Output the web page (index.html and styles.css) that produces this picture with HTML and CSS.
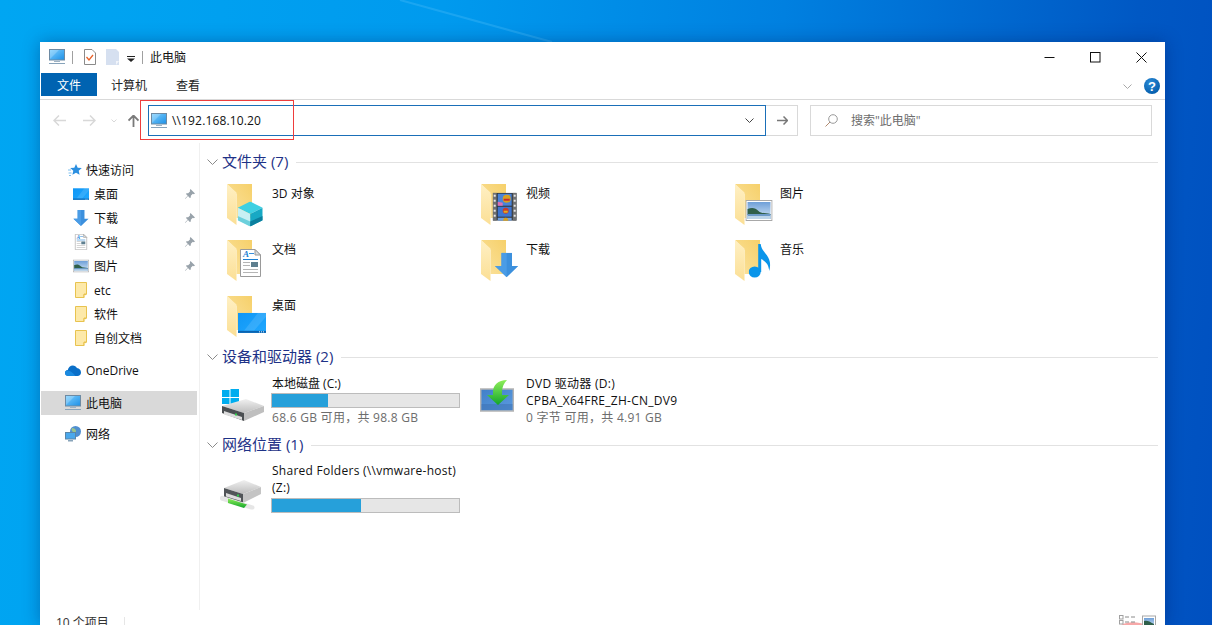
FILE: index.html
```html
<!DOCTYPE html>
<html lang="zh-CN">
<head>
<meta charset="utf-8">
<title>此电脑</title>
<link rel="stylesheet" href="styles.css">
</head>
<body>
<svg class="defs" aria-hidden="true">
  <defs>
    <linearGradient id="gScreen" x1="0" y1="0" x2="1" y2="1"><stop offset="0" stop-color="#7ed0ff"/><stop offset="1" stop-color="#1c8fe6"/></linearGradient>
    <linearGradient id="gBack" x1="1" y1="0" x2="0" y2="1"><stop offset="0" stop-color="#f6d06a"/><stop offset="1" stop-color="#fbe3a0"/></linearGradient>
    <linearGradient id="gLeaf" x1="0" y1="0" x2="0" y2="1"><stop offset="0" stop-color="#fff0c4"/><stop offset="1" stop-color="#fbdf95"/></linearGradient>
    <linearGradient id="gDesk" x1="0" y1="0" x2="1" y2="1"><stop offset="0" stop-color="#0f96f5"/><stop offset="1" stop-color="#20a8ff"/></linearGradient>
    <linearGradient id="gDisk" x1="0" y1="0" x2="0" y2="1"><stop offset="0" stop-color="#f0f0f0"/><stop offset="1" stop-color="#bdbdbd"/></linearGradient>
    <linearGradient id="gDvd" x1="0" y1="0" x2="1" y2="1"><stop offset="0" stop-color="#3f7fc8"/><stop offset="1" stop-color="#5c9be0"/></linearGradient>
    <linearGradient id="gGreen" x1="0" y1="0" x2="0" y2="1"><stop offset="0" stop-color="#8fee5a"/><stop offset="1" stop-color="#12a52a"/></linearGradient>
    <linearGradient id="gSky" x1="0" y1="0" x2="0" y2="1"><stop offset="0" stop-color="#6e9fd8"/><stop offset="1" stop-color="#d4e6f6"/></linearGradient>
    <radialGradient id="gHelp" cx=".4" cy=".3" r=".8"><stop offset="0" stop-color="#2b8ad6"/><stop offset="1" stop-color="#0059a8"/></radialGradient>

    <symbol id="monitor" viewBox="0 0 16 16">
      <rect x=".5" y=".5" width="15" height="10.5" fill="url(#gScreen)" stroke="#6d8aa3"/>
      <path d="M1 10l9-9H1z" fill="#fff" opacity=".22"/>
      <rect x="5" y="12" width="6" height="1" fill="#9fb3c4"/>
      <rect x="0" y="14" width="16" height="1" fill="#87a3ba"/>
    </symbol>
    <symbol id="folder" viewBox="0 0 25 41">
      <path d="M0 0H25V34H9.500V10z" fill="url(#gBack)"/>
      <path d="M0 0L9.500 8.500V41L0 34z" fill="url(#gLeaf)"/>
    </symbol>
    <symbol id="folder-small" viewBox="0 0 12 16">
      <path d="M.5.500h11v11.500h-2.500v3.500H.5z" fill="#fde9a9" stroke="#e8c34f"/>
      <path d="M9 15.500v-3h2.500" fill="#fff4cc" stroke="#e8c34f"/>
    </symbol>
    <symbol id="cube" viewBox="0 0 25 25">
      <path d="M12.500 0L25 6.300 12.500 12.500 0 6.300z" fill="#3ed0e2"/>
      <path d="M0 6.300L12.500 12.500V25L0 18.700z" fill="#c8f0f4"/>
      <path d="M0 14.500L12.500 20V25L0 18.700z" fill="#6cd0dc"/>
      <path d="M25 6.300L12.500 12.500V25L25 18.700z" fill="#17a9c4"/>
      <path d="M25 14.500L12.500 20V25L25 18.700z" fill="#0b7f9e"/>
    </symbol>
    <symbol id="film" viewBox="0 0 24 28">
      <rect width="24" height="28" fill="#2f3336"/>
      <rect x="0" width="4" height="28" fill="#6f7173"/>
      <rect x="20" width="4" height="28" fill="#6f7173"/>
      <g fill="#e8e8e8"><rect x="1" y="2" width="2" height="2"/><rect x="1" y="7" width="2" height="2"/><rect x="1" y="12" width="2" height="2"/><rect x="1" y="17" width="2" height="2"/><rect x="1" y="22" width="2" height="2"/><rect x="21" y="2" width="2" height="2"/><rect x="21" y="7" width="2" height="2"/><rect x="21" y="12" width="2" height="2"/><rect x="21" y="17" width="2" height="2"/><rect x="21" y="22" width="2" height="2"/></g>
      <rect x="5" y="1" width="14" height="12" fill="#4a84d8"/>
      <rect x="5" y="14" width="14" height="10" fill="#3f76d0"/>
      <rect x="5" y="25" width="14" height="3" fill="#6fa0e0"/>
      <circle cx="14" cy="6" r="4" fill="#d8a020"/><path d="M11 6h6v2h-6z" fill="#c82c2c"/>
      <path d="M5 9l5 1v3H5z" fill="#e070b0"/>
      <circle cx="13" cy="18" r="3" fill="#c83c2c"/><rect x="11" y="18" width="4" height="2" fill="#e0b020"/>
      <circle cx="13" cy="27.500" r="2.500" fill="#d8a020"/>
    </symbol>
    <symbol id="arrow" viewBox="0 0 23.300 24.600">
      <path d="M6.500 0H17V13.300H23.300L11.700 24.600 0 13.300H6.500z" fill="#3c90dd"/>
      <path d="M6.500 0H11.700V24.600L0 13.300H6.500z" fill="#4a9ce6"/>
    </symbol>
    <symbol id="doc" viewBox="0 0 21 28">
      <path d="M.5.500H15L20.500 6V27.500H.5z" fill="#fff" stroke="#9a9a9a"/>
      <path d="M15 .5V6H20.500z" fill="#d9dde0" stroke="#9a9a9a"/>
      <text class="doc-a" x="3" y="8">A</text>
      <rect x="9" y="4" width="5" height="1" fill="#3a8fdc"/>
      <rect x="3" y="10" width="15" height="1" fill="#1b7fd4"/>
      <rect x="3" y="13" width="7" height="1" fill="#b5b5b5"/>
      <rect x="11" y="13" width="7" height="5" fill="#5e7f8f"/>
      <rect x="3" y="16" width="7" height="1" fill="#b5b5b5"/>
      <rect x="3" y="20" width="15" height="1" fill="#b5b5b5"/>
      <rect x="3" y="23" width="15" height="1" fill="#b5b5b5"/>
    </symbol>
    <symbol id="desk" viewBox="0 0 28 20">
      <rect width="28" height="20" fill="url(#gDesk)"/>
      <path d="M6 18L20 0h8v4L16 18z" fill="#fff" opacity=".12"/>
      <rect y="18" width="28" height="2" fill="#0a63b0"/>
      <g fill="#e8f4ff"><rect x="21" y="18.500" width="1" height="1"/><rect x="23" y="18.500" width="1" height="1"/><rect x="25" y="18.500" width="1" height="1"/></g>
    </symbol>
    <symbol id="pic" viewBox="0 0 27 21">
      <rect x=".5" y=".5" width="26" height="20" fill="#fff" stroke="#a8a8a8"/>
      <rect x="2" y="2" width="23" height="17" fill="url(#gSky)"/>
      <path d="M2 9c5-2 8-1 11 2s8 2 12 3v1H2z" fill="#2f5f4a"/>
      <rect x="2" y="14" width="23" height="5" fill="#6c9ac8"/>
      <rect x="2" y="16" width="23" height="3" fill="#bcd5ea"/>
    </symbol>
    <symbol id="note" viewBox="0 0 22 34">
      <ellipse cx="6" cy="28" rx="6" ry="5.500" fill="#0a95ea"/>
      <path d="M9.500 0h2.500c.5 5 3.500 7.500 6 11 3 4 4.500 9 2.500 16-.5-5-2-9-8-12V28H9.500z" fill="#0a95ea"/>
    </symbol>
    <symbol id="pin" viewBox="0 0 10 10">
      <path d="M5.500 0L10 4.500 8.800 5.200 7.800 4.800 5.800 6.800 5.800 8.500 4.800 9 3 7 .5 9.800 0 9.500 2.700 6.700 1 5 1.500 4.200 3.200 4.200 5.200 2.200 4.800 1.200z" fill="#98a2aa"/>
    </symbol>
    <symbol id="windisk" viewBox="0 0 48 48">
      <g fill="#00adef"><rect x="4" y="11" width="7.500" height="7"/><rect x="12.500" y="10" width="8.500" height="8"/><rect x="4" y="19" width="7.500" height="6"/><rect x="12.500" y="19" width="8.500" height="6"/></g>
      <path d="M4 27L28 20 46 27 26 34z" fill="url(#gDisk)"/>
      <path d="M4 27L26 34V42L4 34z" fill="#4b4f52"/>
      <path d="M6 32L24 38V41L6 35.500z" fill="#dcdcdc"/>
      <path d="M26 34L46 27V33L26 42z" fill="#bfbfbf"/>
      <rect x="17" y="34.500" width="2" height="2" fill="#2fd04a"/>
    </symbol>
    <symbol id="dvd" viewBox="0 0 34 32">
      <rect x=".7" y="9" width="32.600" height="22" fill="url(#gDvd)" stroke="#b4b4b4" stroke-width="1.500"/>
      <rect x="1.500" y="24" width="31" height="6" fill="#3a6db0" opacity=".5"/>
      <path d="M27 0C18 0 13 5 13 12V15H7L18 25 29 15H22V12C22 7 24 3 27 0z" fill="url(#gGreen)"/>
    </symbol>
    <symbol id="netdisk" viewBox="0 0 44 31">
      <path d="M5 9L25 1 42 8 24 15z" fill="url(#gDisk)"/>
      <path d="M5 9L24 15V24L5 18z" fill="#515558"/>
      <path d="M7 14L22 19V22L7 17.500z" fill="#dcdcdc"/>
      <path d="M24 15L42 8V15L24 24z" fill="#c4c4c4"/>
      <rect x="18" y="15.500" width="2" height="2" fill="#2fd04a"/>
      <path d="M1 19c0-1.500 1.500-2.500 3-2l30 9.500c2 .7 2 3.500 0 4-1 .2-2 0-3-.3L2 21.500c-.7-.5-1-1.500-1-2.500z" fill="#e6e6e6"/>
      <path d="M9 19.500L28 25.500 25 29 9 24z" fill="url(#gGreen)"/>
    </symbol>
  </defs>
</svg>

<svg class="streak" viewBox="0 0 1212 42" aria-hidden="true"><path d="M400 0L552 42" stroke="#4cbcf8" stroke-width="2" opacity=".35"/></svg>

<div class="window">
  <header class="titlebar">
    <svg class="ic16"><use href="#monitor"/></svg>
    <span class="tb-sep tb-sep-a"></span>
    <svg class="tb-check" viewBox="0 0 12 16"><path d="M.5.500H8L11.500 4V15.500H.5z" fill="#fff" stroke="#8a8a8a"/><path d="M2.500 8l2.500 3 4-5" fill="none" stroke="#e8622a" stroke-width="1.300"/></svg>
    <svg class="tb-blank" viewBox="0 0 13 16"><path d="M0 0H10L13 3V16H0z" fill="#d6e0f0"/><path d="M10 12h3l-3 4z" fill="#f2f5fa"/></svg>
    <svg class="tb-drop" viewBox="0 0 8 6"><rect width="8" height="1" fill="#222"/><path d="M0 2.500H8L4 6z" fill="#222"/></svg>
    <span class="tb-sep tb-sep-b"></span>
    <span class="tb-title">此电脑</span>
    <div class="controls">
      <span class="ctl"><svg class="ctl-ic" viewBox="0 0 11 11"><path d="M.5 5.500h10" stroke="#111" fill="none"/></svg></span>
      <span class="ctl"><svg class="ctl-ic" viewBox="0 0 11 11"><rect x=".5" y=".5" width="9.500" height="9.500" stroke="#111" fill="none"/></svg></span>
      <span class="ctl"><svg class="ctl-ic" viewBox="0 0 11 11"><path d="M.5.500l10 10M10.500.500l-10 10" stroke="#111" fill="none"/></svg></span>
    </div>
  </header>

  <nav class="ribbon">
    <span class="tab tab-file">文件</span>
    <span class="tab">计算机</span>
    <span class="tab tab-last">查看</span>
    <svg class="rb-chev" viewBox="0 0 9 5"><path d="M.5.500l4 4 4-4" fill="none" stroke="#a8a8a8"/></svg>
    <svg class="rb-help" viewBox="0 0 16 16"><circle cx="8" cy="8" r="8" fill="url(#gHelp)"/><text class="help-q" x="8" y="12.500">?</text></svg>
  </nav>

  <div class="navrow">
    <svg class="nv-back" viewBox="0 0 13 11"><path d="M6 .5L1 5.500l5 5M1 5.500h12" fill="none" stroke="#d8d8d8" stroke-width="1.500"/></svg>
    <svg class="nv-fwd" viewBox="0 0 13 11"><path d="M7 .5l5 5-5 5M12 5.500H0" fill="none" stroke="#d8d8d8" stroke-width="1.500"/></svg>
    <svg class="nv-down" viewBox="0 0 6 4"><path d="M.5.500L3 3 5.500.500" fill="none" stroke="#d8d8d8"/></svg>
    <svg class="nv-up" viewBox="0 0 11 12"><path d="M.5 5.500L5.500.5l5 5M5.500 1V12" fill="none" stroke="#7a7a7a" stroke-width="1.800"/></svg>
    <div class="address">
      <svg class="ic16"><use href="#monitor"/></svg>
      <span class="addr-text">\\192.168.10.20</span>
      <svg class="addr-chev" viewBox="0 0 9 5"><path d="M.5.500l4 4 4-4" fill="none" stroke="#444"/></svg>
    </div>
    <div class="go"><svg class="go-ic" viewBox="0 0 11 9"><path d="M6.500.5l4 4-4 4M10 4.500H0" fill="none" stroke="#777" stroke-width="1.500"/></svg></div>
    <div class="search">
      <svg class="search-ic" viewBox="0 0 13 13"><circle cx="8" cy="5" r="4.300" fill="none" stroke="#9a9a9a"/><path d="M5 8L.5 12.500" stroke="#b08a70" fill="none"/></svg>
      <span class="search-text">搜索"此电脑"</span>
    </div>
  </div>

  <div class="main">
    <aside class="sidebar">
      <div class="sb-item sb-top">
        <svg class="sb-star" viewBox="0 0 14 14"><path d="M8 1l1.700 3.700 4.100.4-3.100 2.700.9 4L8 9.700 4.400 11.800l.9-4L2.200 5.100l4.100-.4z" fill="#2b8fe0"/><path d="M0 7h3M.5 10h3M1 12.500h2" stroke="#7cc0f0" fill="none"/></svg>
        <span class="sb-label">快速访问</span>
      </div>
      <div class="sb-item sb-sub"><svg class="sb-ic sb-ic-desk"><use href="#desk"/></svg><span class="sb-label">桌面</span><svg class="pin"><use href="#pin"/></svg></div>
      <div class="sb-item sb-sub"><svg class="sb-ic"><use href="#arrow"/></svg><span class="sb-label">下载</span><svg class="pin"><use href="#pin"/></svg></div>
      <div class="sb-item sb-sub"><svg class="sb-ic"><use href="#doc"/></svg><span class="sb-label">文档</span><svg class="pin"><use href="#pin"/></svg></div>
      <div class="sb-item sb-sub"><svg class="sb-ic"><use href="#pic"/></svg><span class="sb-label">图片</span><svg class="pin"><use href="#pin"/></svg></div>
      <div class="sb-item sb-sub"><svg class="sb-ic"><use href="#folder-small"/></svg><span class="sb-label">etc</span></div>
      <div class="sb-item sb-sub"><svg class="sb-ic"><use href="#folder-small"/></svg><span class="sb-label">软件</span></div>
      <div class="sb-item sb-sub"><svg class="sb-ic"><use href="#folder-small"/></svg><span class="sb-label">自创文档</span></div>
      <div class="sb-item sb-top sb-gap-a">
        <svg class="sb-cloud" viewBox="0 0 16 11"><path d="M3.500 11C1.500 11 0 9.700 0 8c0-1.600 1.200-2.800 2.800-2.900C3.300 2.300 5.400.5 7.800.5c1.800 0 3.400 1 4.100 2.600C14.300 3.300 16 5.200 16 7.500c0 2-1.500 3.500-3.500 3.500z" fill="#0a6fc8"/><path d="M3.500 11C1.500 11 0 9.700 0 8c0-1 .5-1.900 1.300-2.400 2.500-.5 6 1.200 9 5.400z" fill="#1a8ae0"/></svg>
        <span class="sb-label">OneDrive</span>
      </div>
      <div class="sb-item sb-top sb-selected sb-gap-b"><svg class="ic16"><use href="#monitor"/></svg><span class="sb-label">此电脑</span></div>
      <div class="sb-item sb-top sb-gap-c">
        <svg class="ic16" viewBox="0 0 16 16"><circle cx="10.500" cy="5.500" r="5.500" fill="#4f8fd0"/><path d="M7 2c2 0 4 1 4 3s-2 2-3 1-2-2-1-4z" fill="#9cc48a"/><rect x=".5" y="6.500" width="10" height="6.500" fill="#4aa8ec" stroke="#5a86a8"/><rect x="3" y="14" width="5" height="1.500" fill="#88a4ba"/></svg>
        <span class="sb-label">网络</span>
      </div>
    </aside>

    <section class="content">
      <div class="group-head">
        <svg class="gh-chev" viewBox="0 0 11 6"><path d="M.5.500l5 5 5-5" fill="none" stroke="#8a8a8a"/></svg>
        <span class="gh-label">文件夹 (7)</span><span class="gh-line"></span>
      </div>
      <div class="grid folders">
        <div class="tile"><svg class="tile-ic"><use href="#folder" x="9" y="3" width="25" height="41"/><use href="#cube" x="19.700" y="20.500" width="25" height="25"/></svg><span class="tile-name">3D 对象</span></div>
        <div class="tile"><svg class="tile-ic"><use href="#folder" x="9" y="3" width="25" height="41"/><use href="#film" x="20.700" y="11.700" width="24" height="28"/></svg><span class="tile-name">视频</span></div>
        <div class="tile"><svg class="tile-ic"><use href="#folder" x="9" y="3" width="25" height="41"/><use href="#pic" x="19.300" y="19" width="27.400" height="21"/></svg><span class="tile-name">图片</span></div>
        <div class="tile"><svg class="tile-ic"><use href="#folder" x="9" y="3" width="25" height="41"/><use href="#doc" x="22" y="12" width="21" height="28"/></svg><span class="tile-name">文档</span></div>
        <div class="tile"><svg class="tile-ic"><use href="#folder" x="9" y="3" width="25" height="41"/><use href="#arrow" x="23" y="15.700" width="23.300" height="24.600"/></svg><span class="tile-name">下载</span></div>
        <div class="tile"><svg class="tile-ic"><use href="#folder" x="9" y="3" width="25" height="41"/><use href="#note" x="22.700" y="7" width="22" height="34"/></svg><span class="tile-name">音乐</span></div>
        <div class="tile"><svg class="tile-ic"><use href="#folder" x="9" y="3" width="25" height="41"/><use href="#desk" x="20" y="19.700" width="28" height="20.300"/></svg><span class="tile-name">桌面</span></div>
      </div>

      <div class="group-head gh-drives">
        <svg class="gh-chev" viewBox="0 0 11 6"><path d="M.5.500l5 5 5-5" fill="none" stroke="#8a8a8a"/></svg>
        <span class="gh-label">设备和驱动器 (2)</span><span class="gh-line"></span>
      </div>
      <div class="grid drives">
        <div class="drive">
          <svg class="tile-ic"><use href="#windisk" width="48" height="48"/></svg>
          <div class="drive-info">
            <div class="drive-line drive-cjk">本地磁盘 (C:)</div>
            <div class="bar"><div class="fill" style="width:30%"></div></div>
            <div class="drive-line drive-sub">68.6 GB 可用，共 98.8 GB</div>
          </div>
        </div>
        <div class="drive">
          <svg class="tile-ic"><use href="#dvd" x="8" y="1" width="34" height="32"/></svg>
          <div class="drive-info">
            <div class="drive-line">DVD 驱动器 (D:)</div>
            <div class="drive-line">CPBA_X64FRE_ZH-CN_DV9</div>
            <div class="drive-line drive-sub">0 字节 可用，共 4.91 GB</div>
          </div>
        </div>
      </div>

      <div class="group-head gh-net">
        <svg class="gh-chev" viewBox="0 0 11 6"><path d="M.5.500l5 5 5-5" fill="none" stroke="#8a8a8a"/></svg>
        <span class="gh-label">网络位置 (1)</span><span class="gh-line"></span>
      </div>
      <div class="grid drives drives-net">
        <div class="drive">
          <svg class="tile-ic"><use href="#netdisk" x="1" y="13" width="44" height="31"/></svg>
          <div class="drive-info">
            <div class="drive-line">Shared Folders (\\vmware-host)</div>
            <div class="drive-line">(Z:)</div>
            <div class="bar bar-net"><div class="fill" style="width:47.500%"></div></div>
          </div>
        </div>
      </div>
    </section>
  </div>

  <footer class="status">
    <span class="status-text">10 个项目</span>
    <span class="status-sep"></span>
    <svg class="status-views" viewBox="0 0 38 14">
      <path d="M1 11C6 6 22 6 28 11V14H1z" fill="#f7a8a8"/>
      <g fill="#fff" stroke="#a0a0a0"><rect x=".5" y=".5" width="3.500" height="3.500"/><rect x=".5" y="5.500" width="3.500" height="3.500"/></g>
      <path d="M6 2h4M12 2h4M6 7h4M12 7h4" stroke="#8a8a8a" fill="none"/>
      <rect x="23.500" y="1" width="13" height="13" fill="#fff" stroke="#a8a8a8"/>
      <rect x="25" y="3" width="10" height="9" fill="url(#gSky)"/>
      <path d="M25 6c3-1 5 0 10 3v3H25z" fill="#2f5f4a"/>
    </svg>
  </footer>
</div>

<div class="redbox"></div>
</body>
</html>
```
FILE: styles.css
```css
* { box-sizing: border-box; }
html, body { margin: 0; height: 625px; overflow: hidden; }
body {
  position: relative;
  padding: 42px 47px 0 40px;
  background: linear-gradient(95deg, #00a6f2 0%, #009aee 35%, #0080e0 62%, #0058c4 90%, #0050c0 100%);
  font-family: "Open Sans", "Noto Sans CJK SC", sans-serif;
  font-size: 12px;
  color: #111;
}
.defs { position: absolute; width: 0; height: 0; }
.streak { position: absolute; left: 0; top: 0; width: 1212px; height: 42px; }
.window {
  position: relative;
  width: 1125px;
  height: 583px;
  background: #fff;
  box-shadow: 0 0 16px rgba(0, 20, 80, .35);
  display: flex;
  flex-direction: column;
  overflow: hidden;
}
.ic16 { width: 16px; height: 16px; flex: none; }

/* title bar */
.titlebar { height: 30px; flex: none; display: flex; align-items: center; padding-left: 9px; }
.tb-sep { width: 1px; height: 13px; background: #a0a0a0; flex: none; }
.tb-sep-a { margin-left: 7px; }
.tb-check { width: 12px; height: 16px; margin-left: 11px; }
.tb-blank { width: 13px; height: 16px; margin-left: 10px; }
.tb-drop { width: 8px; height: 6px; margin-left: 8px; margin-top: 3px; }
.tb-sep-b { margin-left: 7px; }
.tb-title { margin-left: 7px; line-height: 17px; }
.controls { margin-left: auto; margin-right: 1px; display: flex; }
.ctl { width: 46px; height: 30px; display: flex; align-items: center; justify-content: center; }
.ctl-ic { width: 11px; height: 11px; }

/* ribbon */
.ribbon { height: 28px; flex: none; display: flex; align-items: flex-start; padding-left: 1px; border-bottom: 1px solid #d9d9d9; }
.tab { height: 23px; margin-top: 1px; padding: 0 14px; line-height: 25px; color: #222; }
.tab-file { width: 56px; padding: 0; text-align: center; background: #0063b1; color: #fff; }
.tab-last { margin-left: 1px; }
.rb-chev { width: 9px; height: 5px; margin-left: auto; margin-top: 12px; }
.rb-help { width: 16px; height: 16px; margin-left: 12px; margin-right: 5px; margin-top: 6px; }
.help-q { font-family: "Liberation Sans", sans-serif; font-size: 13px; font-weight: 700; fill: #fff; text-anchor: middle; }

/* navigation row */
.navrow { height: 43px; flex: none; display: flex; align-items: flex-start; padding: 5px 0 0 13px; }
.nv-back, .nv-fwd { width: 13px; height: 11px; margin-top: 10px; flex: none; }
.nv-fwd { margin-left: 17px; }
.nv-down { width: 6px; height: 4px; margin-left: 15px; margin-top: 14px; flex: none; }
.nv-up { width: 11px; height: 12px; margin-left: 11px; margin-top: 10px; flex: none; }
.address {
  width: 618px; height: 31px; margin-left: 9px; flex: none;
  border: 1px solid #1a6fb8;
  display: flex; align-items: center; padding-left: 2px;
}
.addr-text { margin-left: 5px; line-height: 17px; letter-spacing: .15px; }
.addr-chev { width: 9px; height: 5px; margin-left: auto; margin-right: 11px; }
.go { width: 32px; height: 31px; border: 1px solid #d9d9d9; border-left: 0; flex: none; display: flex; align-items: center; padding-left: 11px; }
.go-ic { width: 11px; height: 9px; }
.search { width: 342px; height: 31px; margin-left: 12px; border: 1px solid #d9d9d9; flex: none; display: flex; align-items: center; padding-left: 14px; }
.search-ic { width: 13px; height: 13px; }
.search-text { margin-left: 13px; color: #6d6d6d; line-height: 17px; }

/* main */
.main { flex: 1; min-height: 0; display: flex; }
.sidebar { width: 160px; flex: none; border-right: 1px solid #f0f0f0; padding: 15px 2px 0 1px; }
.sb-item { height: 24px; display: flex; align-items: center; }
.sb-top { padding-left: 24px; }
.sb-sub { padding-left: 32px; }
.sb-label { margin-left: 5px; line-height: 17px; }
.sb-star { width: 14px; height: 14px; margin-left: 3px; flex: none; }
.sb-star + .sb-label { margin-left: 4px; }
.sb-ic { width: 16px; height: 16px; flex: none; }
.sb-ic-desk { height: 14px; }
.pin { width: 10px; height: 10px; margin-left: auto; margin-right: 2px; flex: none; }
.sb-cloud { width: 16px; height: 11px; flex: none; }
.sb-gap-a { margin-top: 8px; }
.sb-gap-b { margin-top: 9px; }
.sb-gap-c { margin-top: 7px; }
.sb-selected { background: #d9d9d9; }

/* content */
.content { flex: 1; min-width: 0; padding: 9px 7px 0 0; }
.group-head { height: 20px; display: flex; align-items: center; padding-left: 7px; }
.gh-chev { width: 11px; height: 6px; flex: none; }
.gh-label { margin: 0 0 2px 4px; font-size: 15px; line-height: 20px; color: #1e3287; white-space: nowrap; }
.gh-line { flex: 1; height: 1px; background: #e2e2e2; margin-left: 8px; }
.gh-drives { margin-top: 2px; }
.gh-net { margin-top: 8px; }
.grid { display: grid; grid-template-columns: repeat(3, 254px); margin-left: 18px; }
.folders { margin-top: 5px; grid-auto-rows: 56px; }
.drives { margin-top: 8px; }
.drives-net { margin-top: 7px; }
.tile { display: flex; align-items: flex-start; padding-top: 4px; }
.tile-ic { width: 52px; height: 48px; flex: none; overflow: visible; }
.tile-name { margin: 4px 0 0 2px; line-height: 17px; }
.drive { display: flex; align-items: flex-start; }
.drive .tile-ic { margin-top: 4px; }
.drive-info { margin-left: 2px; min-width: 0; }
.drive-line { line-height: 17px; white-space: nowrap; letter-spacing: .27px; }
.drive-cjk { letter-spacing: 0; }
.drive-sub { color: #6d6d6d; }
.bar { width: 189px; height: 15px; margin: 1px 0 1px -1px; border: 1px solid #bcbcbc; background: #e6e6e6; }
.bar-net { margin-top: 2px; }
.fill { height: 100%; background: #26a0da; }

/* status */
.status { height: 15px; flex: none; display: flex; align-items: flex-start; padding: 4px 8px 0 16px; overflow: hidden; }
.status-text { line-height: 17px; color: #333; }
.status-sep { width: 1px; height: 12px; background: #e6e6e6; margin: 3px 0 0 15px; }
.status-views { width: 38px; height: 14px; margin: 1px 0 0 auto; flex: none; }
.doc-a { font-family: "Liberation Serif", serif; font-size: 9px; font-style: italic; font-weight: 700; fill: #1b7fd4; }

/* red annotation drawn over the address bar */
.redbox { position: absolute; left: 140px; top: 100px; width: 154px; height: 40px; border: 1px solid #ee3d3d; }
```
